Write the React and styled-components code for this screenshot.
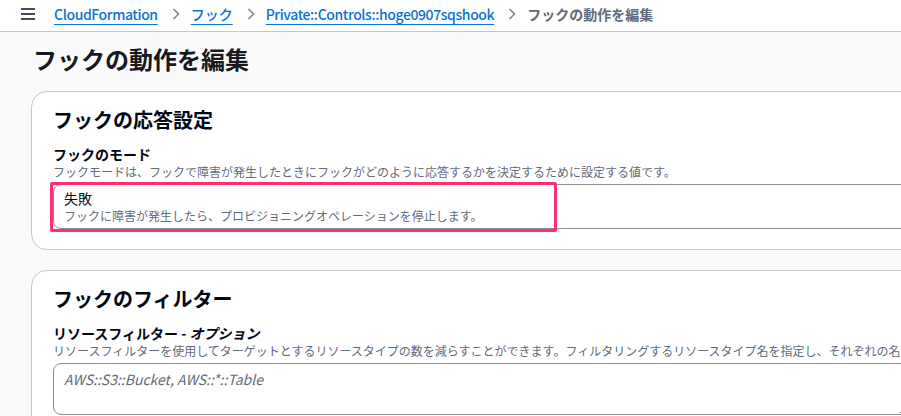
import React from "react";
import styled, { createGlobalStyle } from "styled-components";

const GlobalStyle = createGlobalStyle`
  html, body {
    margin: 0;
    padding: 0;
    background: #fafafa;
    overflow: hidden;
  }
  body {
    font-family: "Noto Sans CJK JP", sans-serif;
    color: #000716;
  }
`;

const TopBar = styled.header`
  height: 31px;
  background: #ffffff;
  border-bottom: 1px solid #c6c6cd;
  display: flex;
  align-items: center;
  padding-left: 20px;
  white-space: nowrap;
`;

const MenuButton = styled.span`
  display: flex;
  width: 16px;
  height: 16px;
  margin-right: 18px;
  margin-top: -4px;
  color: #414d5c;
`;

const Crumbs = styled.nav`
  display: flex;
  align-items: center;
  font-size: 14px;
  line-height: 20px;
  margin-top: -4px;
`;

const CrumbLink = styled.a`
  color: #0972d3;
  font-weight: 500;
  letter-spacing: ${(p) => (p.$latin ? "-0.4px" : "0")};
  text-decoration: underline;
  text-underline-offset: 4px;
  text-decoration-thickness: 1px;
`;

const CrumbCurrent = styled.span`
  color: #5f6b7a;
  font-weight: 700;
`;

const Sep = styled.span`
  display: flex;
  margin: 0 11px 0 14px;
  color: #7d8998;
`;

const Main = styled.main`
  padding: 12px 0 0 31px;
  width: 1100px;
`;

const PageTitle = styled.h1`
  margin: 0 0 17px 2px;
  font-size: 24px;
  line-height: 30px;
  font-weight: 700;
  color: #16191f;
`;

const Card = styled.section`
  background: #ffffff;
  border: 1px solid #c6c6cd;
  border-radius: 16px;
  padding: 16px 21px 20px;
  margin-bottom: 20px;
`;

const CardTitle = styled.h2`
  margin: 0 0 12px;
  font-size: 20px;
  line-height: 24px;
  font-weight: 700;
`;

const Label = styled.div`
  font-size: 14px;
  line-height: 20px;
  font-weight: 700;
`;

const Italic = styled.i`
  font-style: italic;
`;

const Desc = styled.div`
  font-size: 12px;
  line-height: 16px;
  color: #5f6b7a;
  margin-bottom: 4px;
  white-space: nowrap;
`;

const TileWrap = styled.div`
  position: relative;
`;

const Tile = styled.div`
  border: 1px solid #8c8c94;
  border-radius: 8px;
  padding: 3px 10px 4px;
`;

const TileTitle = styled.div`
  font-size: 14px;
  line-height: 20px;
  color: #000716;
`;

const TileDesc = styled.div`
  font-size: 12px;
  line-height: 16px;
  color: #5f6b7a;
`;

const Highlight = styled.div`
  position: absolute;
  left: -3px;
  top: -2px;
  width: 507px;
  height: 50px;
  box-sizing: border-box;
  border: 3px solid #ff2e6e;
  border-radius: 2px;
  pointer-events: none;
`;

const TextArea = styled.textarea`
  display: block;
  width: 856px;
  height: 52px;
  box-sizing: border-box;
  border: 1px solid #8c8c94;
  border-radius: 8px;
  padding: 5px 10px;
  font-size: 14px;
  line-height: 20px;
  font-family: "Noto Sans CJK JP", sans-serif;
  background: #ffffff;
  margin-top: 1px;
  &::placeholder {
    color: #5f6b7a;
    font-style: italic;
  }
`;

const Chevron = () => (
  <svg width="8" height="12" viewBox="0 0 8 12" fill="none">
    <path d="M1.5 1l5 5-5 5" stroke="currentColor" strokeWidth="1.6" />
  </svg>
);

const Hamburger = () => (
  <svg width="16" height="16" viewBox="0 0 16 16" fill="none">
    <path d="M1 3h14M1 8h14M1 13h14" stroke="currentColor" strokeWidth="2" />
  </svg>
);

export default function App() {
  return (
    <>
      <GlobalStyle />
      <TopBar>
        <MenuButton>
          <Hamburger />
        </MenuButton>
        <Crumbs>
          <CrumbLink $latin>CloudFormation</CrumbLink>
          <Sep><Chevron /></Sep>
          <CrumbLink>フック</CrumbLink>
          <Sep><Chevron /></Sep>
          <CrumbLink $latin>Private::Controls::hoge0907sqshook</CrumbLink>
          <Sep><Chevron /></Sep>
          <CrumbCurrent>フックの動作を編集</CrumbCurrent>
        </Crumbs>
      </TopBar>
      <Main>
        <PageTitle>フックの動作を編集</PageTitle>
        <Card>
          <CardTitle>フックの応答設定</CardTitle>
          <Label>フックのモード</Label>
          <Desc>
            フックモードは、フックで障害が発生したときにフックがどのように応答するかを決定するために設定する値です。
          </Desc>
          <TileWrap>
            <Tile>
              <TileTitle>失敗</TileTitle>
              <TileDesc>
                フックに障害が発生したら、プロビジョニングオペレーションを停止します。
              </TileDesc>
            </Tile>
            <Highlight />
          </TileWrap>
        </Card>
        <Card>
          <CardTitle>フックのフィルター</CardTitle>
          <Label>
            リソースフィルター - <Italic>オプション</Italic>
          </Label>
          <Desc>
            リソースフィルターを使用してターゲットとするリソースタイプの数を減らすことができます。フィルタリングするリソースタイプ名を指定し、それぞれの名前をカンマで区切ります。
          </Desc>
          <TextArea placeholder="AWS::S3::Bucket, AWS::*::Table" />
        </Card>
      </Main>
    </>
  );
}
